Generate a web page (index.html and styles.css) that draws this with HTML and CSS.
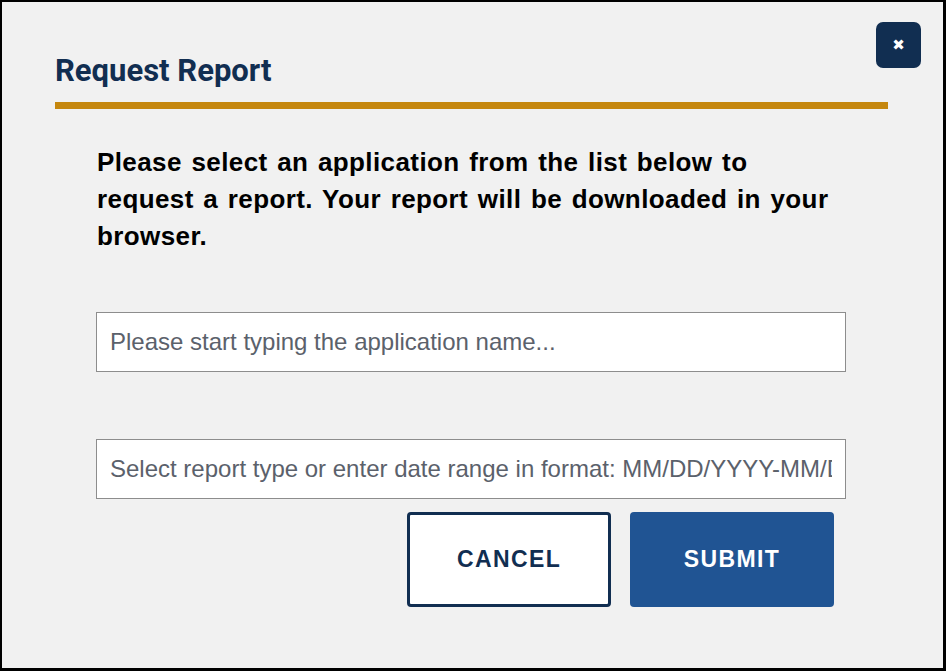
FILE: index.html
```html
<!DOCTYPE html>
<html lang="en">
<head>
    <title>Request Report</title>

    <link rel="stylesheet" href="styles.css">
</head>
<body>
    <div class="modal">
        <button class="closeBtn" aria-label="Close">&#x2716;</button>
        <div class="modalHead">
            <h2 class="title">Request Report</h2>
        </div>
        <div class="modalBody">
            <p class="intro">Please select an application from the list below to request a report. Your report will be downloaded in your browser.</p>
            <input class="field" id="appIn" type="text" placeholder="Please start typing the application name...">
            <input class="field" id="rangeIn" type="text" placeholder="Select report type or enter date range in format: MM/DD/YYYY-MM/DD/YYYY">
            <div class="actions">
                <button class="btn cancel">Cancel</button>
                <button class="btn submit">Submit</button>
            </div>
        </div>
    </div>
</body>
</html>
```

FILE: styles.css
```css
html, body{
    margin: 0;
    padding: 0;
}
body{
    font-family: "Liberation Sans", Arial, sans-serif;
    background-color: #f1f1f1;
}
.modal{
    position: relative;
    box-sizing: border-box;
    width: 946px;
    height: 671px;
    border: solid #000;
    border-width: 2px 3px 3px 2px;
    background-color: #f1f1f1;
    padding: 0 55px 0 53px;
}
.closeBtn{
    position: absolute;
    top: 20px;
    right: 22px;
    width: 45px;
    height: 46px;
    border: none;
    border-radius: 7px;
    background-color: #112e51;
    color: #fff;
    font-size: 15px;
    line-height: 46px;
    padding: 0;
    font-family: "DejaVu Sans", sans-serif;
}
.modalHead{
    padding-top: 52px;
    padding-bottom: 14px;
    border-bottom: 7px solid #c5870e;
}
.title{
    margin: 0;
    font-family: Roboto, sans-serif;
    font-weight: 700;
    font-size: 31px;
    line-height: 34px;
    color: #112e51;
}
.modalBody{
    padding-left: 41px;
    width: 750px;
    display: flex;
    flex-direction: column;
}
.intro{
    margin: 35px 12px 0 0;
    font-weight: 700;
    font-size: 26px;
    line-height: 37px;
    letter-spacing: 0.4px;
    word-spacing: 2px;
    color: #000;
    padding-left: 1px;
}
.field{
    box-sizing: border-box;
    width: 750px;
    height: 60px;
    margin: 0;
    border: 1px solid #8d8d8d;
    background-color: #fff;
    padding: 0 13px;
    font-family: "Liberation Sans", Arial, sans-serif;
    font-size: 24px;
    color: #212121;
    outline: none;
}
.field::placeholder{
    color: #5b616b;
}
#appIn{
    margin-top: 57px;
}
#rangeIn{
    margin-top: 67px;
}
.actions{
    display: flex;
    justify-content: flex-end;
    gap: 19px;
    margin-top: 13px;
    padding-right: 12px;
}
.btn{
    box-sizing: border-box;
    width: 204px;
    height: 95px;
    border-radius: 4px;
    font-family: "Liberation Sans", Arial, sans-serif;
    font-weight: 700;
    font-size: 23px;
    letter-spacing: 1.4px;
    text-transform: uppercase;
}
.cancel{
    background-color: #fff;
    color: #112e51;
    border: 3px solid #112e51;
}
.submit{
    background-color: #205493;
    color: #fff;
    border: none;
}
```
